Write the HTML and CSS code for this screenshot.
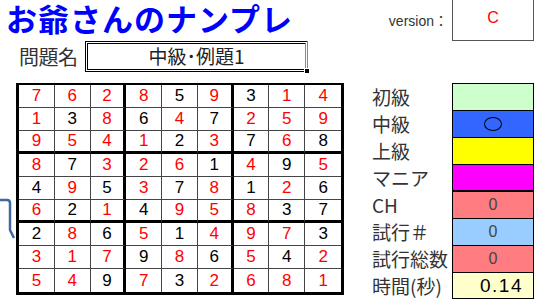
FILE: index.html
```html
<!DOCTYPE html>
<html lang="ja">
<head>
  <meta charset="UTF-8">
  <title>お爺さんのナンプレ</title>
  <link rel="stylesheet" href="styles.css">
</head>
<body>

  <svg class="bracket" width="16" height="44" viewBox="0 0 16 44">
    <path d="M0 2 H7 Q10 2 10 5 V32 L14 40" fill="none" stroke="#41679f" stroke-width="2.5"/>
  </svg>

  <div class="top">
    <h1 class="title">お爺さんのナンプレ</h1>
    <div class="version">
      <span class="version-label">version：</span>
      <div class="version-box">C</div>
    </div>
  </div>

  <div class="name-row">
    <span class="name-label">問題名</span>
    <div class="name-box">中級･例題1</div>
  </div>

  <div class="main">
    <div class="board" id="board"></div>

    <div class="side">
      <span class="label">初級</span><div class="swatch lv1"></div>
      <span class="label">中級</span><div class="swatch lv2"><span class="mark"></span></div>
      <span class="label">上級</span><div class="swatch lv3"></div>
      <span class="label">マニア</span><div class="swatch lv4 last"></div>
      <span class="label"></span><div></div>
      <span class="label">CH</span><div class="swatch pink">0</div>
      <span class="label">試行＃</span><div class="swatch sky">0</div>
      <span class="label">試行総数</span><div class="swatch pink">0</div>
      <span class="label">時間(秒)</span><div class="swatch cream time last">0.14</div>
    </div>
  </div>

  <script>
    // r = 赤（ヒント以外の解答）
    const rows = [
      '7r6r2r8r59r31r4r',
      '1r38r64r72r5r9r',
      '9r5r4r1r23r76r8',
      '8r73r2r6r14r95r',
      '49r53r78r12r6',
      '6r21r49r5r8r37',
      '28r65r14r9r7r3',
      '3r1r7r98r65r42r',
      '5r4r97r32r6r8r1r'
    ];
    const board = document.getElementById('board');
    rows.forEach((row) => {
      const cells = row.match(/\dr?/g);
      cells.forEach((c) => {
        const cell = document.createElement('div');
        cell.className = 'cell' + (c.length > 1 ? ' red' : '');
        cell.textContent = c[0];
        board.appendChild(cell);
      });
    });
  </script>

</body>
</html>
```

FILE: styles.css
```css
body {
  margin: 0;
  width: 548px;
  height: 305px;
  overflow: hidden;
  background: #fff;
  color: #222;
  font-family: "Liberation Sans", "Noto Sans CJK JP", sans-serif;
  position: relative;
}
.bracket {
  position: absolute;
  left: 0;
  top: 198px;
}
.top {
  display: flex;
  height: 41px;
}
.title {
  margin: 0;
  padding-left: 6px;
  font-family: "Noto Sans CJK JP", sans-serif;
  font-size: 31px;
  font-weight: bold;
  line-height: 36px;
  letter-spacing: 1px;
  color: #0000ff;
}
.version {
  margin-left: auto;
  margin-right: 14px;
  display: flex;
  align-items: flex-start;
}
.version-label {
  font-size: 14px;
  color: #333;
  margin-top: 10px;
  margin-right: 4px;
}
.version-box {
  width: 82px;
  height: 42px;
  margin-top: -1px;
  border: 1px solid #555;
  box-sizing: border-box;
  text-align: center;
  padding-top: 9px;
  font-size: 16px;
  color: #ff0000;
}
.name-row {
  display: flex;
  align-items: center;
  height: 31px;
  padding-left: 19px;
}
.name-label {
  width: 66px;
  font-family: "Noto Sans CJK JP", sans-serif;
  font-size: 20px;
  letter-spacing: -0.5px;
  color: #333;
}
.name-box {
  position: relative;
  width: 223px;
  height: 31px;
  box-sizing: border-box;
  border: 3px double #000;
  border-right-color: #888;
  text-align: center;
  font-family: "Noto Sans CJK JP", sans-serif;
  font-size: 19px;
  line-height: 24px;
  color: #222;
}
.name-box::after {
  content: "";
  position: absolute;
  right: -5px;
  bottom: -5px;
  width: 4px;
  height: 4px;
  background: #000;
  border: 1px solid #fff;
}
.main {
  display: flex;
  margin-top: 11px;
  padding-left: 16px;
}
.board {
  display: grid;
  grid-template-columns: repeat(9, 1fr);
  grid-template-rows: repeat(9, 1fr);
  width: 328px;
  height: 212px;
  box-sizing: border-box;
  border: 3px solid #000;
  border-top-width: 2px;
}
.cell {
  display: flex;
  align-items: center;
  justify-content: center;
  border-right: 1px solid #444;
  border-bottom: 1px solid #444;
  font-size: 17px;
  color: #000;
}
.cell:nth-child(9n+3),
.cell:nth-child(9n+6) {
  border-right: 3px solid #000;
}
.cell:nth-child(9n) {
  border-right: none;
}
.cell:nth-child(n+19):nth-child(-n+27),
.cell:nth-child(n+46):nth-child(-n+54) {
  border-bottom: 3px solid #000;
}
.cell:nth-child(n+73) {
  border-bottom: none;
}
.red {
  color: #ff0000;
}
.side {
  display: grid;
  grid-template-columns: 80px 82px;
  grid-template-rows: repeat(9, 1fr);
  height: 211px;
  margin-left: 28px;
}
.label {
  display: flex;
  align-items: center;
  font-family: "Noto Sans CJK JP", sans-serif;
  font-size: 19px;
  color: #333;
}
.swatch {
  display: flex;
  align-items: center;
  justify-content: center;
  border: 1px solid #000;
  border-bottom: none;
  font-size: 16px;
  color: #444;
}
.swatch.last {
  border-bottom: 1px solid #000;
}
.lv1 { background: #ccffcc; }
.lv2 { background: #3366ff; }
.lv3 { background: #ffff00; }
.lv4 { background: #ff00ff; }
.pink { background: #ff7c80; }
.sky { background: #99ccff; }
.cream { background: #ffffcc; }
.mark {
  width: 16px;
  height: 12px;
  border: 1px solid #000;
  border-radius: 50%;
}
.time {
  justify-content: flex-end;
  padding-right: 10px;
  font-size: 19px;
  letter-spacing: 1.5px;
  color: #000;
}
```
